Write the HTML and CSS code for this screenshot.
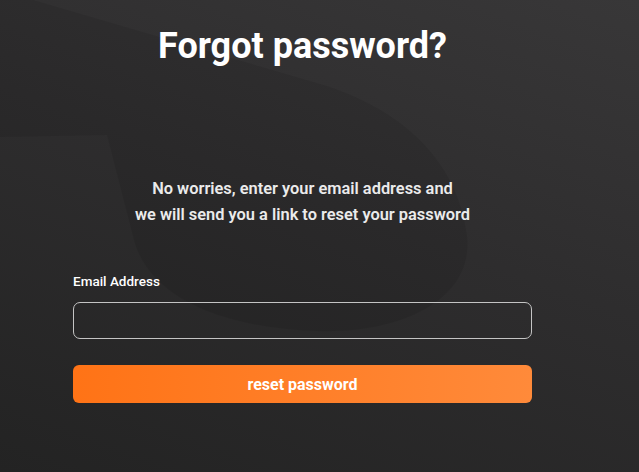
FILE: index.html
```html
<!DOCTYPE html>
<html lang="en">
<head>
  <meta charset="UTF-8" /><meta name="viewport" content="width=device-width, initial-scale=1"/>
  <title>Forgot password</title>
  <link rel="stylesheet" href="styles.css">
</head>
<body>
  <!-- background decoration -->
  <svg class="bg-shapes" width="639" height="472" viewBox="0 0 639 472" aria-hidden="true">
    <path d="M0,0 L33,0 L320,84 C400,108 458,160 467,236 C474,300 400,334 317,331 C220,328 146,296 133,236 L107,135 L0,137 Z" fill="#000" fill-opacity="0.08"/>
  </svg>

  <div class="wrapper">
    <h1 class="title">Forgot password?</h1>
    <p class="intro">No worries, enter your email address and<br/>we will send you a link to reset your password</p>

    <form class="reset-form" onsubmit="return false">
      <label for="email">Email Address</label>
      <input type="email" id="email" autocomplete="off"/>
      <button type="submit">reset password</button>
    </form>
  </div>
</body>
</html>
```

FILE: styles.css
```css
* { box-sizing: border-box; margin:0; padding:0; }
body {
  font-family: Roboto, 'Liberation Sans', sans-serif;
  background: linear-gradient(200deg, #383738 0%, #2e2d2e 45%, #232323 100%);
  color: #fff;
  height: 100vh;
  overflow: hidden;
  position: relative;
}
.bg-shapes {
  position: absolute;
  top: 0; left: 0;
  z-index: 0;
}
.wrapper {
  position: relative;
  z-index: 1;
  width: 459px;
  margin-left: 73px;
  padding-top: 25px;
  text-align: center;
}
.title {
  font-size: 36px;
  line-height: 42px;
  font-weight: 700;
}
.intro {
  margin-top: 109px;
  font-size: 16.4px;
  line-height: 26px;
  font-weight: 600;
  color: #ebebeb;
}
.reset-form {
  margin-top: 45px;
  display: flex;
  flex-direction: column;
  text-align: left;
}
.reset-form label {
  font-size: 13.5px;
  line-height: 17px;
  font-weight: 500;
}
.reset-form input {
  margin-top: 12px;
  height: 37px;
  padding: 0 12px;
  border: 1px solid #c4c4c4;
  border-radius: 7px;
  background: transparent;
  color: #fff;
  font-size: 15px;
  outline: none;
}
.reset-form button {
  margin-top: 26px;
  height: 38px;
  border: none;
  border-radius: 6px;
  background: linear-gradient(90deg, #ff7316, #ff8a3a);
  color: #fff;
  font-family: inherit;
  font-size: 16px;
  font-weight: 700;
  cursor: pointer;
}
```
